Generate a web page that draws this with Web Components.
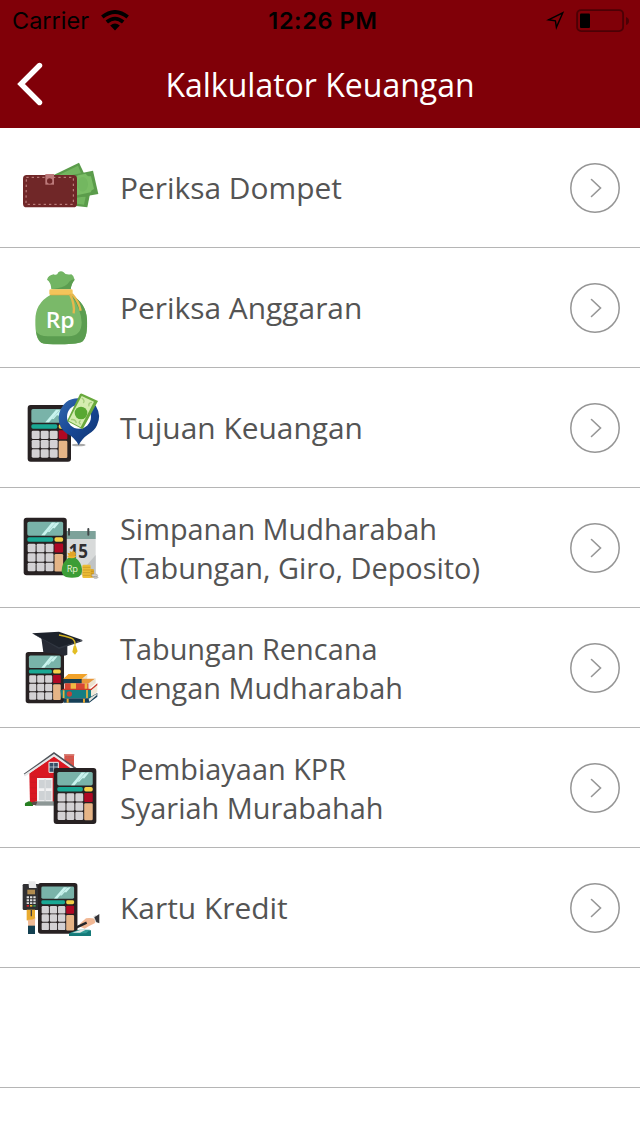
<!DOCTYPE html>
<html lang="id">
<head>
<meta charset="utf-8">
<title>Kalkulator Keuangan</title>
<style>
   html, body {
      margin: 0;
      height: 100%;
      overflow: hidden;
      background: #fff;
      font-family: "Open Sans", "Noto Sans", sans-serif;
   }
</style>
</head>
<body>
<calculator-menu>
   <status-bar slot="top" carrier="Carrier" time="12:26 PM"></status-bar>
   <nav-header slot="top">Kalkulator Keuangan</nav-header>
   <menu-row icon="wallet">Periksa Dompet</menu-row>
   <menu-row icon="bag">Periksa Anggaran</menu-row>
   <menu-row icon="goal">Tujuan Keuangan</menu-row>
   <menu-row icon="savings" double>Simpanan Mudharabah<br>(Tabungan, Giro, Deposito)</menu-row>
   <menu-row icon="study" double>Tabungan Rencana<br>dengan Mudharabah</menu-row>
   <menu-row icon="house" double>Pembiayaan KPR<br>Syariah Murabahah</menu-row>
   <menu-row icon="card">Kartu Kredit</menu-row>
   <menu-row></menu-row>
</calculator-menu>

<script>
// The desk calculator that most of the icons share; 130x170 units at scale 1.
function calculator(x, y, sx = 1, sy = sx) {
   let keys = "";
   for(let row = 0; row < 3; ++row)
      for(let col = 0; col < 3; ++col)
         keys += `<rect x="${12 + col * 27}" y="${77 + row * 28}" width="24" height="25" rx="4"/>`;
   return `
   <g transform="translate(${x} ${y}) scale(${sx} ${sy})">
      <rect width="130" height="170" rx="9" fill="#272122"/>
      <rect x="11" y="12" width="108" height="41" rx="5" fill="#79b3a9"/>
      <path d="M53 52 L85 14 L96 14 L64 52Z M73 42 L96 16 L101 16 L78 42Z M88 30 L101 14 L108 14 L93 32Z" fill="#c9f4ef"/>
      <rect x="11" y="58" width="78" height="13" rx="5" fill="#19a894"/>
      <rect x="93" y="58" width="26" height="13" rx="5" fill="#f4d149"/>
      <g fill="#d3d1d4">${keys}</g>
      <rect x="93" y="76" width="26" height="27" rx="3" fill="#b00824"/>
      <rect x="93" y="107" width="26" height="52" rx="4" fill="#e5b486"/>
   </g>`;
}

// Drawings use three units per pixel; "top" places each one inside its row.
const ICONS = {
   wallet: {
      top: 66,
      art: `
      <path d="M125 78 L207 38 L222 70 L160 115Z" fill="#5b9c4b"/>
      <path d="M145 76 L204 47 L214 72 L170 96Z" fill="#72b55f"/>
      <path d="M176 115 L240 132 L232 172 L170 165Z" fill="#5b9c4b"/>
      <path d="M190 138 L227 140 L222 164 L190 160Z" fill="#72b55f"/>
      <path d="M175 77 L249 62 L265 132 L192 145Z" fill="#5b9c4b"/>
      <path d="M190 83 Q197 82 204 76 L228 71 Q231 80 243 79 L252 117 Q243 120 242 127 L201 136Z" fill="#7abd65"/>
      <ellipse cx="218" cy="103" rx="16" ry="22" fill="#73b760"/>
      <rect x="39" y="75" width="162" height="97" rx="11" fill="#702728"/>
      <path d="M49 82 H190 V163 H48Z" fill="none" stroke="#c88d8b" stroke-width="3" stroke-dasharray="7 9"/>
      <path d="M106 72 H132 V104 H106Z" fill="#bd7b7c"/>
      <circle cx="119" cy="93" r="8" fill="#702728"/>`,
   },
   bag: {
      top: 42,
      art: `
      <path d="M124 82 Q123 61 111 53 Q115 40 131 37 Q141 42 145 31 Q153 25 161 31 Q166 40 184 37 Q193 42 194 53 Q184 64 182 82Z" fill="#72b563"/>
      <path d="M142 79 Q169 75 179 58 Q186 50 194 53 Q184 64 182 82 H126Z" fill="#5b9d50"/>
      <path d="M122 98 Q75 124 76 175 Q75 233 94 242 Q102 247 151 247 Q208 247 218 238 Q234 222 231 174 Q229 124 184 98Z" fill="#7ab969"/>
      <path d="M78 208 Q86 223 114 223 H176 Q215 222 215 181 Q213 140 183 98 Q228 122 231 171 Q233 225 218 238 Q208 247 151 247 Q102 247 94 242 Q81 233 78 208Z" fill="#5b9d50"/>
      <rect x="118" y="82" width="70" height="17" rx="4" fill="#f3c45a"/>
      <path d="M180 96 Q195 128 191 154 M186 96 Q207 119 212 146" fill="none" stroke="#e6b84d" stroke-width="7"/>
      <path d="M122 99 H181" stroke="#d9a943" stroke-width="2"/>
      <text x="107" y="197" font-size="67" font-weight="600" textLength="87" lengthAdjust="spacingAndGlyphs" fill="#fff">Rp</text>`,
   },
   goal: {
      top: 51,
      art: calculator(53, 60) + `
      <ellipse cx="206" cy="180" rx="21" ry="4" fill="#aaa"/>
      <path d="M206 181 Q195 158 169 145 Q146 128 146 99 Q147 69 169 51 Q186 38 211 40 Q242 41 258 64 Q275 92 261 121 Q254 137 235 148 Q216 161 206 181Z" fill="url(#pin)"/>
      <circle cx="207" cy="95" r="36" fill="#fff"/>
      <path d="M210 27 Q214 24 218 27 L264 48 L218 133 L171 108Z" fill="#69a93d"/>
      <path d="M215 33 L252 50 L212 127 L176 107Z" fill="#d5edb0"/>
      <path d="M215 39 Q226 46 220 54 M246 52 Q234 53 237 64 M183 104 Q196 101 199 114 M212 118 Q203 112 212 107" fill="none" stroke="#a5ce7b" stroke-width="4"/>
      <circle cx="213" cy="84" r="19" fill="#58a832"/>
      <defs><linearGradient id="pin" x1="0" x2="1" y1="0" y2="1">
         <stop stop-color="#3367ae"/><stop offset=".5" stop-color="#174795"/><stop offset="1" stop-color="#10346f"/>
      </linearGradient></defs>`,
   },
   savings: {
      top: 51,
      art: `
      <rect x="140" y="78" width="117" height="132" rx="5" fill="#d8dada"/>
      <path d="M257 150 V210 H205Z" fill="#c0c3c4"/>
      <path d="M145 78 H257 V102 H145Z" fill="#7da29a"/>
      <path d="M177 72 V89 M235 72 V89" stroke="#424849" stroke-width="6" stroke-linecap="round"/>
      <text x="176" y="159" font-size="58" font-weight="700" textLength="58" lengthAdjust="spacingAndGlyphs" fill="#302f31">15</text>
      ` + calculator(41, 38, .995, 1.018) + `
      <rect x="228" y="192" width="24" height="26" rx="4" fill="#dfa92a"/>
      <path d="M229 199 H251 M229 206 H251 M229 213 H251" stroke="#b98a1a" stroke-width="2"/>
      <rect x="217" y="179" width="25" height="40" rx="4" fill="#edbd36"/>
      <path d="M218 187 H241 M218 195 H241 M218 203 H241 M218 211 H241" stroke="#c29321" stroke-width="2"/>
      <ellipse cx="254" cy="211" rx="9" ry="4" fill="#d5d3d0" stroke="#aaa8a5" stroke-width="2"/>
      <ellipse cx="257" cy="217" rx="7" ry="3" fill="#c7c5c2" stroke="#9c9a97" stroke-width="2"/>
      <path d="M178 156 L172 143 L180 145 L179 138 L185 141 L189 137 L192 141 L197 139 L196 144 L199 146 L192 156Z" fill="#e2a426"/>
      <path d="M175 158 Q155 173 155 198 Q156 212 168 216 Q186 220 205 216 Q217 211 216 192 Q213 170 196 158Z" fill="#3b9d36"/>
      <path d="M173 154 Q186 161 198 153" fill="none" stroke="#efb529" stroke-width="5"/>
      <text x="170" y="200" font-size="28" textLength="34" lengthAdjust="spacingAndGlyphs" fill="#e8f3d7">Rp</text>`,
   },
   study: {
      top: 42,
      art: calculator(47, 90, .885, .906) + `
      <path d="M94 48 L172 66 V98 Q160 105 149 97 Q132 93 116 93 L100 91Z" fill="#262a34"/>
      <path d="M66 34 L147 29 L217 54 L147 79Z" fill="#1d222b"/>
      <path d="M66 34 L147 76 L217 54 V58 L147 81Z" fill="#303640"/>
      <path d="M147 39 Q165 42 183 48 Q197 52 195 76" fill="none" stroke="#d3b21f" stroke-width="4"/>
      <path d="M191 72 L187 90 L195 98 L203 88 L198 72Z" fill="#e2bd23"/>
      <path d="M160 171 L176 156 H232 L215 171Z" fill="#f1a229"/>
      <path d="M161 171 H215 V184 H161Z" fill="#153f51"/>
      <path d="M215 171 L232 157 V169 L215 184Z" fill="#ece2cf"/>
      <path d="M164 184 L182 170 H256 L240 184Z" fill="#e8973a"/>
      <path d="M160 171 L176 156 H232 L215 171Z" fill="#f1a229"/>
      <path d="M161 171 H215 V184 H161Z" fill="#153f51"/>
      <path d="M164 184 H236 V201 H164Z" fill="#d74634"/>
      <path d="M236 184 L257 169 V184 L236 201Z" fill="#ece2cf"/>
      <path d="M182 184 H198 V201 H182Z M224 184 H232 V201 H224Z" fill="#f0ba43"/>
      <path d="M154 204 L162 200 H243 L262 184 V190 L243 206Z" fill="#c93c2c"/>
      <path d="M151 204 H243 V229 H155Z" fill="#157e83"/>
      <path d="M243 206 L262 190 V209 L243 229Z" fill="#f2ead9"/>
      <path d="M161 205 V229 M231 204 V229" stroke="#edb43c" stroke-width="5"/>
      <circle cx="178" cy="216" r="8" fill="#c94335"/>
      <path d="M161 229 H235 L262 213 V224 L238 242 H161Z" fill="#163f57"/>
      <path d="M173 230 V242 M222 230 V242" stroke="#e3a632" stroke-width="6"/>
      <path d="M236 230 L260 215 V220 L238 239Z" fill="#e5e5dc"/>`,
   },
   house: {
      top: 42,
      art: `
      <path d="M163 38 H192 V80 H163Z" fill="#dc5046"/>
      <path d="M163 48 H192 M163 60 H192 M173 40 V48 M183 48 V60" stroke="#ba6b61" stroke-width="2"/>
      <path d="M162 36 H193 V41 H162Z" fill="#d58177"/>
      <path d="M58 94 L132 42 L206 94 V188 H60Z" fill="#d91822"/>
      <path d="M61 105 H132 M61 121 H132 M61 137 H80 M61 154 H80 M61 170 H80" stroke="#b81b23" stroke-width="1"/>
      <path d="M43 98 L132 34 L216 93" fill="none" stroke="#50555b" stroke-width="6"/>
      <path d="M43 101 L132 40 L214 98" fill="none" stroke="#e7e8e9" stroke-width="6"/>
      <path d="M117 61 H145 V91 H117Z" fill="#354f68" stroke="#f1f2f1" stroke-width="3"/>
      <path d="M131 61 V91 M117 75 H145" stroke="#dbe2e4" stroke-width="2"/>
      <path d="M81 108 H128 V181 H81Z" fill="#f2f2f3"/>
      <path d="M87 114 H103 V139 H87Z M108 114 H124 V139 H108Z M87 147 H103 V175 H87Z M108 147 H124 V175 H108Z" fill="#ced2d5"/>
      <path d="M105 112 V178" stroke="#aeb3b6" stroke-width="2"/>
      <path d="M76 178 H137 V191 H76Z" fill="#8d9796"/>
      <path d="M45 192 Q43 181 51 181 Q57 174 64 181 Q72 183 69 192Z" fill="#267e20"/>
      <path d="M66 188 L67 179 H82 L78 190Z" fill="#564b48"/>
      ` + calculator(131, 78, .985, .988),
   },
   card: {
      top: 66,
      art: `
      <rect x="38" y="42" width="49" height="78" rx="4" fill="#303033"/>
      <path d="M55 34 H76 L80 54 H57Z" fill="#e8e8e9"/>
      <path d="M52 59 H75 V73 H52Z" fill="#b18c50"/>
      <g fill="#ddd">
         <path d="M50 79 H57 V85 H50Z M60 79 H67 V85 H60Z M70 79 H77 V85 H70Z M50 88 H57 V94 H50Z M60 88 H67 V94 H60Z M70 88 H77 V94 H70Z M50 97 H57 V102 H50Z M60 97 H67 V102 H60Z M70 97 H77 V102 H70Z"/>
      </g>
      <path d="M50 105 H57 V110 H50Z" fill="#d3262a"/>
      <path d="M60 105 H67 V110 H60Z" fill="#e4b42c"/>
      <path d="M70 105 H77 V110 H70Z" fill="#39934e"/>
      <path d="M53 144 L76 142 L74 168 H55Z" fill="#f3c09b"/>
      <path d="M50 119 H75 V151 H50Z" fill="#e9ab2e"/>
      <path d="M64 120 V139" stroke="#424043" stroke-width="4"/>
      <path d="M54 149 Q65 151 75 145 V168 H56Z" fill="#efba95"/>
      <path d="M54 167 H75 V192 H54Z" fill="#123f50"/>
      ` + calculator(84, 39, .91, .894) + `
      <path d="M177 190 L202 181 H243 V198 H177Z" fill="#157a79"/>
      <path d="M180 190 L207 179 H240 L228 190Z" fill="#329b96"/>
      <path d="M187 188 L211 180 H226 L210 188Z" fill="#e6e9e7"/>
      <path d="M209 162 L228 145 Q241 142 259 148 L254 160 Q235 169 224 176 L211 170Z" fill="#f1b895"/>
      <path d="M198 173 L230 158" stroke="#242629" stroke-width="7"/>
      <path d="M250 139 L258 134 L265 160 L256 157Z" fill="#ddd"/>
      <path d="M253 142 L268 132 V160 L259 156Z" fill="#353438"/>`,
   },
};

class MenuIcon extends HTMLElement {
   constructor() {
      super();
      this.attachShadow({ mode: "open" });
   }
   connectedCallback() {
      const icon = ICONS[this.getAttribute("name")];
      if (!icon)
         return;
      this.shadowRoot.innerHTML = `
      <style>
         :host { display: block; width: 110px; height: 119px; }
         svg   { display: block; font-family: "Open Sans", sans-serif; }
      </style>
      <svg width="110" height="119" viewBox="-30 -${icon.top} 330 357">${icon.art}</svg>`;
   }
}
customElements.define("menu-icon", MenuIcon);

class RingChevron extends HTMLElement {
   constructor() {
      super();
      this.attachShadow({ mode: "open" }).innerHTML = `
      <style>
         :host { display: block; width: 50px; height: 50px; }
         svg   { display: block; }
      </style>
      <svg width="50" height="50" fill="none" stroke="#969696">
         <circle cx="25" cy="25" r="24.2" stroke-width="1.5"/>
         <path d="M21.5 16.5 L30.5 25 L21.5 33.5" stroke-width="1.6" stroke-linecap="round"/>
      </svg>`;
   }
}
customElements.define("ring-chevron", RingChevron);

class MenuRow extends HTMLElement {
   constructor() {
      super();
      this.attachShadow({ mode: "open" });
   }
   connectedCallback() {
      const icon = this.getAttribute("icon");
      this.shadowRoot.innerHTML = `
      <style>
         :host {
            display: flex;
            align-items: center;
            box-sizing: border-box;
            height: 120px;
            padding-right: 20px;
            border-bottom: 1px solid #b5b5b5;
            color: #545454;
         }
         .label {
            flex: 1;
            padding: 0 0 1px 10px;
            font-size: 29.9px;
            line-height: 39px;
            white-space: nowrap;
         }
         :host([double]) .label {
            padding: 1px 0 0 10px;
            font-size: 28.9px;
         }
      </style>
      ${icon ? `
      <menu-icon name="${icon}"></menu-icon>
      <div class="label"><slot></slot></div>
      <ring-chevron></ring-chevron>` : ""}`;
   }
}
customElements.define("menu-row", MenuRow);

class StatusBar extends HTMLElement {
   constructor() {
      super();
      this.attachShadow({ mode: "open" });
   }
   connectedCallback() {
      this.shadowRoot.innerHTML = `
      <style>
         :host {
            display: grid;
            grid-template-columns: 1fr auto 1fr;
            align-items: center;
            box-sizing: border-box;
            height: 41px;
            padding: 1px 10px 0 12px;
            color: #000;
            font: 23.5px/40px Inter, sans-serif;
         }
         div  { display: flex; align-items: center; }
         svg  { display: block; }
         .wifi { margin: 0 0 2px 12px; }
         .time { font-weight: 600; letter-spacing: .6px; padding-left: 4px; }
         .right { justify-content: flex-end; gap: 11px; }
      </style>
      <div>
         <span>${this.getAttribute("carrier")}</span>
         <svg class="wifi" width="28" height="21" viewBox="0 0 28 21">
            <g fill="none" stroke="#000" stroke-width="3.8">
               <path d="M1.3 7.1 Q14 -3.2 26.7 7.1"/>
               <path d="M5.8 12 Q14 5.2 22.2 12"/>
            </g>
            <path d="M9.2 15.6 Q14 11.6 18.8 15.6 L14 20.4Z"/>
         </svg>
      </div>
      <div class="time">${this.getAttribute("time")}</div>
      <div class="right">
         <svg width="20" height="20" viewBox="0 0 20 20" fill="none" stroke="#000" stroke-width="1.4">
            <path d="M3.4 8.8 L17.8 1.8 L11.4 16.4 L10.4 9.8Z"/>
         </svg>
         <svg width="54" height="24" viewBox="0 0 54 24">
            <rect x="1.1" y="1.1" width="46" height="21" rx="4" fill="none" stroke="#4c0005" stroke-width="1.9"/>
            <rect x="4" y="4.5" width="10" height="14.5" rx="1"/>
            <path d="M50 8 Q53 9 53 12 Q53 15 50 16Z" fill="#4c0005"/>
         </svg>
      </div>`;
   }
}
customElements.define("status-bar", StatusBar);

class NavHeader extends HTMLElement {
   constructor() {
      super();
      this.attachShadow({ mode: "open" }).innerHTML = `
      <style>
         :host {
            display: grid;
            grid-template-columns: 60px 1fr 60px;
            align-items: center;
            height: 87px;
            color: #fff;
         }
         svg { display: block; margin: 0 0 1px 17px; }
         .title {
            text-align: center;
            font-size: 32px;
            line-height: 44px;
            white-space: nowrap;
         }
      </style>
      <svg width="26" height="44" viewBox="0 0 26 44">
         <path d="M22.5 3.5 L4 22 L22.5 40.5" fill="none" stroke="#fff" stroke-width="5.4" stroke-linecap="round"/>
      </svg>
      <div class="title"><slot></slot></div>`;
   }
}
customElements.define("nav-header", NavHeader);

class CalculatorMenu extends HTMLElement {
   constructor() {
      super();
      this.attachShadow({ mode: "open" }).innerHTML = `
      <style>
         :host  { display: block; }
         header { height: 128px; background: #800008; }
      </style>
      <header><slot name="top"></slot></header>
      <main><slot></slot></main>`;
   }
}
customElements.define("calculator-menu", CalculatorMenu);
</script>
</body>
</html>
